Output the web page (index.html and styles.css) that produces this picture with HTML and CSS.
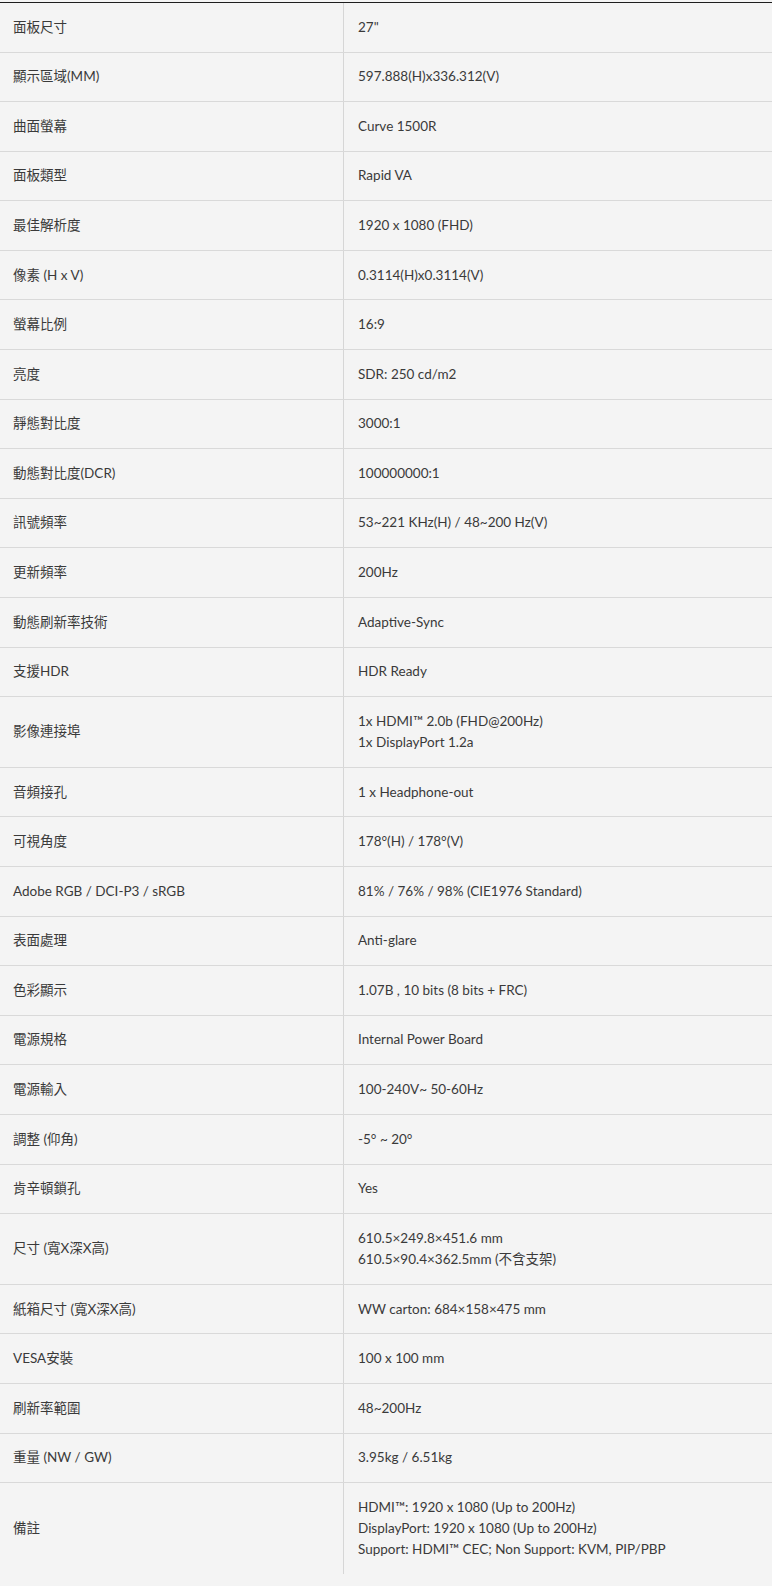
FILE: index.html
```html
<!DOCTYPE html>
<html lang="zh-Hant">
<head>
<meta charset="utf-8">
<title>規格</title>
<link rel="stylesheet" href="styles.css">
</head>
<body>
<div class="specs">
  <div class="row"><div class="k">面板尺寸</div><div class="v">27"</div></div>
  <div class="row"><div class="k">顯示區域(MM)</div><div class="v">597.888(H)x336.312(V)</div></div>
  <div class="row"><div class="k">曲面螢幕</div><div class="v">Curve 1500R</div></div>
  <div class="row"><div class="k">面板類型</div><div class="v">Rapid VA</div></div>
  <div class="row"><div class="k">最佳解析度</div><div class="v">1920 x 1080 (FHD)</div></div>
  <div class="row"><div class="k">像素 (H x V)</div><div class="v">0.3114(H)x0.3114(V)</div></div>
  <div class="row"><div class="k">螢幕比例</div><div class="v">16:9</div></div>
  <div class="row"><div class="k">亮度</div><div class="v">SDR: 250 cd/m2</div></div>
  <div class="row"><div class="k">靜態對比度</div><div class="v">3000:1</div></div>
  <div class="row"><div class="k">動態對比度(DCR)</div><div class="v">100000000:1</div></div>
  <div class="row"><div class="k">訊號頻率</div><div class="v">53~221 KHz(H) / 48~200 Hz(V)</div></div>
  <div class="row"><div class="k">更新頻率</div><div class="v">200Hz</div></div>
  <div class="row"><div class="k">動態刷新率技術</div><div class="v">Adaptive-Sync</div></div>
  <div class="row"><div class="k">支援HDR</div><div class="v">HDR Ready</div></div>
  <div class="row"><div class="k">影像連接埠</div><div class="v">1x HDMI™ 2.0b (FHD@200Hz)<br>1x DisplayPort 1.2a</div></div>
  <div class="row"><div class="k">音頻接孔</div><div class="v">1 x Headphone-out</div></div>
  <div class="row"><div class="k">可視角度</div><div class="v">178°(H) / 178°(V)</div></div>
  <div class="row"><div class="k">Adobe RGB / DCI-P3 / sRGB</div><div class="v">81% / 76% / 98% (CIE1976 Standard)</div></div>
  <div class="row"><div class="k">表面處理</div><div class="v">Anti-glare</div></div>
  <div class="row"><div class="k">色彩顯示</div><div class="v">1.07B , 10 bits (8 bits + FRC)</div></div>
  <div class="row"><div class="k">電源規格</div><div class="v">Internal Power Board</div></div>
  <div class="row"><div class="k">電源輸入</div><div class="v">100-240V~ 50-60Hz</div></div>
  <div class="row"><div class="k">調整 (仰角)</div><div class="v">-5° ~ 20°</div></div>
  <div class="row"><div class="k">肯辛頓鎖孔</div><div class="v">Yes</div></div>
  <div class="row"><div class="k">尺寸 (寬X深X高)</div><div class="v">610.5×249.8×451.6 mm<br>610.5×90.4×362.5mm (不含支架)</div></div>
  <div class="row"><div class="k">紙箱尺寸 (寬X深X高)</div><div class="v">WW carton: 684×158×475 mm</div></div>
  <div class="row"><div class="k">VESA安裝</div><div class="v">100 x 100 mm</div></div>
  <div class="row"><div class="k">刷新率範圍</div><div class="v">48~200Hz</div></div>
  <div class="row"><div class="k">重量 (NW / GW)</div><div class="v">3.95kg / 6.51kg</div></div>
  <div class="row last"><div class="k">備註</div><div class="v">HDMI™: 1920 x 1080 (Up to 200Hz)<br>DisplayPort: 1920 x 1080 (Up to 200Hz)<br>Support: HDMI™ CEC; Non Support: KVM, PIP/PBP</div></div>
</div>
</body>
</html>
```
FILE: styles.css
```css
html, body {
  margin: 0;
  padding: 0;
  background: #f4f4f4;
}
body {
  font-family: "Lato", "Noto Sans CJK TC", sans-serif;
  font-size: 13.5px;
  line-height: 21.2px;
  color: #3a3a3a;
}
.specs {
  margin-top: 2px;
  border-top: 1px solid #1e1e1e;
}
.row {
  display: grid;
  grid-template-columns: 344px 1fr;
  border-bottom: 1px solid #d9d9d9;
}
.row.last {
  border-bottom: none;
}
.k, .v {
  padding: 13.7px 13px;
  display: flex;
  flex-direction: column;
  justify-content: center;
}
.v {
  padding-left: 14px;
}
.k {
  border-right: 1px solid #d6d6d6;
}
```
